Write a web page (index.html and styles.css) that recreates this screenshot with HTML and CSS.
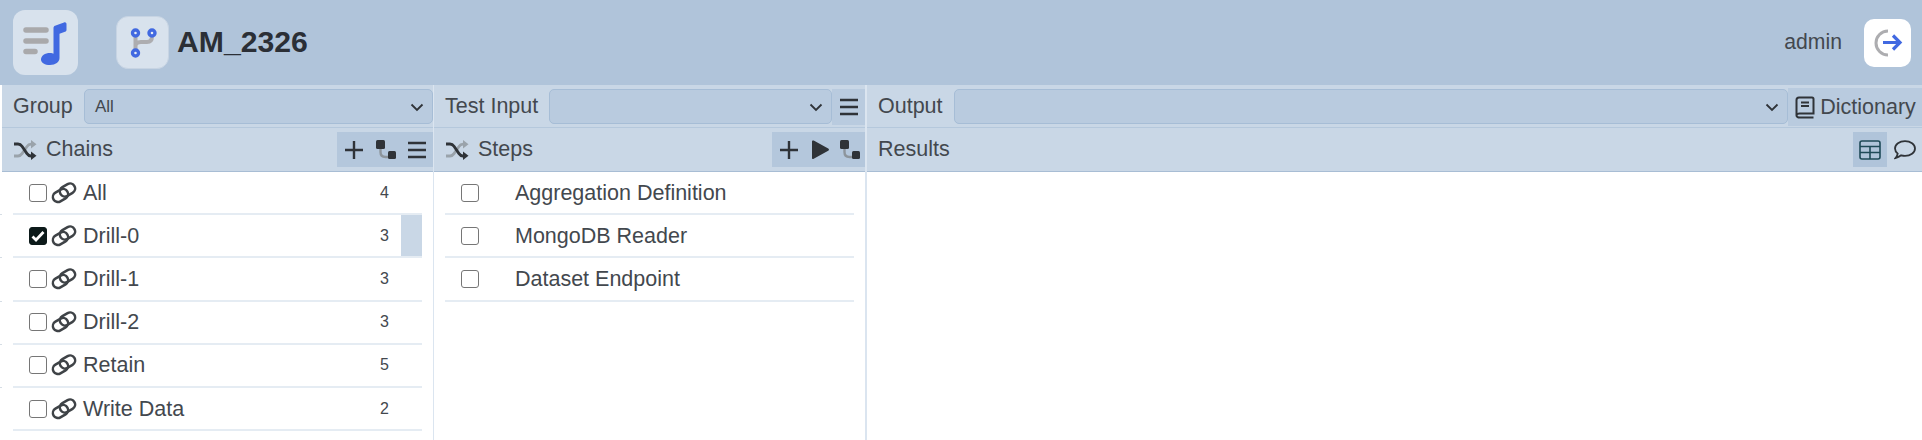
FILE: index.html
```html
<!DOCTYPE html>
<html lang="en">
<head>
<meta charset="utf-8">
<title>AM_2326</title>
<link rel="stylesheet" href="styles.css">
</head>
<body>
<svg class="defs" width="0" height="0" aria-hidden="true">
  <defs>
    <symbol id="i-shuffle" viewBox="0 0 24 20">
      <path d="M1 16h4c2 0 3-1 4-2.400l5-7.100c1-1.500 2-2.300 4-2.300h2" fill="none" stroke="#9aa3ab" stroke-width="2.800"/>
      <path d="M18 0l5.500 4.200L18 8.400z" fill="#9aa3ab"/>
      <path d="M1 4h4c2 0 3 .8 4 2.300l5 7.300c1 1.500 2 2.400 4 2.400h2" fill="none" stroke="#2f3338" stroke-width="2.800"/>
      <path d="M18 11.600l5.500 4.200L18 20z" fill="#2f3338"/>
    </symbol>
    <symbol id="i-plus" viewBox="0 0 20 20">
      <path d="M10 1v18M1 10h18" fill="none" stroke="#2f3338" stroke-width="2.400"/>
    </symbol>
    <symbol id="i-flow" viewBox="0 0 20 20">
      <path d="M4.500 8v4c0 3 2 5 5 5h3" fill="none" stroke="#8d959c" stroke-width="2.400"/>
      <rect x="0" y="0" width="9" height="9" rx="1.500" fill="#2f3338"/>
      <rect x="12" y="11" width="8" height="8" rx="1.500" fill="#2f3338"/>
    </symbol>
    <symbol id="i-menu" viewBox="0 0 20 20">
      <path d="M1 3h18M1 10h18M1 17h18" fill="none" stroke="#2f3338" stroke-width="2.600"/>
    </symbol>
    <symbol id="i-link" viewBox="0 0 26 22">
      <rect x="1.500" y="8.500" width="16" height="10" rx="5" transform="rotate(-30 9.500 13.500)" fill="none" stroke="#3f4347" stroke-width="2.500"/>
      <rect x="8.500" y="3" width="16" height="10" rx="5" transform="rotate(-30 16.500 8)" fill="none" stroke="#3f4347" stroke-width="2.500"/>
    </symbol>
  </defs>
</svg>

<header class="topbar">
  <div class="logo">
    <svg width="46" height="46" viewBox="0 0 46 46" aria-hidden="true">
      <path d="M3 10h20M3 21h20M3 31.500h9" fill="none" stroke="#a9a9ab" stroke-width="5.500" stroke-linecap="round"/>
      <path d="M30.500 8c0-1 .5-1.800 1.500-2.200l9-3.300c1.500-.5 2.500.3 2.500 1.700v5.500c0 1-.4 1.700-1.500 2.100l-5.500 2V38c0 4-4 7-9.500 7-5 0-9-2-9-5.500 0-3.800 4-6.500 9-6.500 1.500 0 3 .2 3.500.7z" fill="#4169e1"/>
    </svg>
  </div>
  <div class="project-icon">
    <svg width="30" height="32" viewBox="0 0 30 32" aria-hidden="true">
      <path d="M7.500 6v20M24 6v3c0 4-2 6-5 6h-6c-3 0-5.500 1-5.500 4" fill="none" stroke="#adadb0" stroke-width="4"/>
      <circle cx="7.500" cy="6" r="3" fill="#e8eef5" stroke="#4169e1" stroke-width="3.400"/>
      <circle cx="24" cy="6" r="3" fill="#e8eef5" stroke="#4169e1" stroke-width="3.400"/>
      <circle cx="7.500" cy="26" r="3" fill="#e8eef5" stroke="#4169e1" stroke-width="3.400"/>
    </svg>
  </div>
  <h1 class="title">AM_2326</h1>
  <span class="user">admin</span>
  <button class="logout" aria-label="Log out">
    <svg width="30" height="28" viewBox="0 0 30 28" aria-hidden="true">
      <path d="M15 2A12 12 0 0 0 15 26" fill="none" stroke="#adadb0" stroke-width="3"/>
      <path d="M10 13.500h17M20 6.500l7 7-7 7" fill="none" stroke="#4169e1" stroke-width="3.200"/>
    </svg>
  </button>
</header>

<main class="columns">
  <section class="col col-chains">
    <div class="filter">
      <label class="filter-label">Group</label>
      <div class="select select-text">All<svg class="chev" width="14" height="9" viewBox="0 0 14 9"><path d="M1.500 1.500L7 7l5.500-5.500" fill="none" stroke="#2f3338" stroke-width="1.800"/></svg></div>
    </div>
    <div class="head">
      <svg class="shuffle" width="24" height="20"><use href="#i-shuffle"/></svg>
      <span class="head-title">Chains</span>
      <div class="tools">
        <svg width="20" height="20"><use href="#i-plus"/></svg>
        <svg width="20" height="20"><use href="#i-flow"/></svg>
        <svg width="20" height="20"><use href="#i-menu"/></svg>
      </div>
    </div>
    <ul class="list">
      <li class="row"><span class="box"></span><svg class="link" width="26" height="22"><use href="#i-link"/></svg><span class="name">All</span><span class="count">4</span><span class="mark"></span></li>
      <li class="row"><span class="box checked"><svg width="14" height="12" viewBox="0 0 14 12"><path d="M1.500 6.500L5 10l7.500-8" fill="none" stroke="#fff" stroke-width="2.800"/></svg></span><svg class="link" width="26" height="22"><use href="#i-link"/></svg><span class="name">Drill-0</span><span class="count">3</span><span class="mark on"></span></li>
      <li class="row"><span class="box"></span><svg class="link" width="26" height="22"><use href="#i-link"/></svg><span class="name">Drill-1</span><span class="count">3</span><span class="mark"></span></li>
      <li class="row"><span class="box"></span><svg class="link" width="26" height="22"><use href="#i-link"/></svg><span class="name">Drill-2</span><span class="count">3</span><span class="mark"></span></li>
      <li class="row"><span class="box"></span><svg class="link" width="26" height="22"><use href="#i-link"/></svg><span class="name">Retain</span><span class="count">5</span><span class="mark"></span></li>
      <li class="row"><span class="box"></span><svg class="link" width="26" height="22"><use href="#i-link"/></svg><span class="name">Write Data</span><span class="count">2</span><span class="mark"></span></li>
    </ul>
  </section>

  <section class="col col-steps">
    <div class="filter">
      <label class="filter-label">Test Input</label>
      <div class="select"><svg class="chev" width="14" height="9" viewBox="0 0 14 9"><path d="M1.500 1.500L7 7l5.500-5.500" fill="none" stroke="#2f3338" stroke-width="1.800"/></svg></div>
      <div class="side-btn"><svg width="20" height="20"><use href="#i-menu"/></svg></div>
    </div>
    <div class="head">
      <svg class="shuffle" width="24" height="20"><use href="#i-shuffle"/></svg>
      <span class="head-title">Steps</span>
      <div class="tools">
        <svg width="20" height="20"><use href="#i-plus"/></svg>
        <svg width="20" height="20" viewBox="0 0 20 20"><path d="M2 1.500c0-1 .8-1.400 1.700-.9l14.500 8c1 .6 1 1.600 0 2.200l-14.500 8c-.9.500-1.700.1-1.700-.9z" fill="#2f3338"/></svg>
        <svg width="20" height="20"><use href="#i-flow"/></svg>
      </div>
    </div>
    <ul class="list list-steps">
      <li class="row step"><span class="box"></span><span class="name">Aggregation Definition</span></li>
      <li class="row step"><span class="box"></span><span class="name">MongoDB Reader</span></li>
      <li class="row step"><span class="box"></span><span class="name">Dataset Endpoint</span></li>
    </ul>
  </section>

  <section class="col col-output">
    <div class="filter">
      <label class="filter-label">Output</label>
      <div class="select"><svg class="chev" width="14" height="9" viewBox="0 0 14 9"><path d="M1.500 1.500L7 7l5.500-5.500" fill="none" stroke="#2f3338" stroke-width="1.800"/></svg></div>
      <div class="side-btn dict">
        <svg width="20" height="23" viewBox="0 0 20 23"><path d="M4 1.500h13c.8 0 1.500.7 1.500 1.500v14.500H4.500c-1.700 0-3 1.100-3 2s1.300 2 3 2h14M1.500 19.500V4c0-1.400 1.100-2.500 2.500-2.500M6 6.500h8M6 10h8" fill="none" stroke="#2f3338" stroke-width="2"/></svg>
        <span>Dictionary</span>
      </div>
    </div>
    <div class="head">
      <span class="head-title results">Results</span>
      <div class="view-tools">
        <div class="view active">
          <svg width="22" height="20" viewBox="0 0 22 20"><rect x="1" y="1" width="20" height="18" rx="2" fill="none" stroke="#1f4a58" stroke-width="1.600"/><path d="M1 6.500h20M1 12.500h20M11 6.500V19" fill="none" stroke="#1f4a58" stroke-width="1.600"/></svg>
        </div>
        <div class="view">
          <svg width="22" height="20" viewBox="0 0 22 20"><path d="M11 1.200c5.500 0 10 3 10 7.300s-4.500 7.300-10 7.300c-1.300 0-2.600-.2-3.800-.5-1.300 1-3.200 2.200-5.700 2.700 1.100-1.300 1.900-2.900 2.200-4.400C2.200 12.300 1 10.500 1 8.500 1 4.200 5.500 1.200 11 1.200z" fill="none" stroke="#2f3338" stroke-width="1.800"/></svg>
        </div>
      </div>
    </div>
  </section>
</main>
</body>
</html>
```

FILE: styles.css
```css
* { box-sizing: border-box; }
html, body { margin: 0; padding: 0; }
body {
  width: 1922px;
  height: 440px;
  overflow: hidden;
  background: #fff;
  color: #43484e;
  font-family: "Liberation Sans", Arial, sans-serif;
  font-size: 21.500px;
}
.defs { position: absolute; }

.topbar {
  height: 85px;
  background: #b0c4da;
  display: flex;
  align-items: center;
  padding: 0 0 0 13px;
}
.logo {
  width: 65px;
  height: 65px;
  border-radius: 12px;
  background: #d8e2ed;
  display: flex;
  align-items: center;
  justify-content: center;
}
.project-icon {
  width: 53px;
  height: 53px;
  margin-left: 38px;
  border: 1px solid #c7d4e3;
  border-radius: 12px;
  background: #d8e2ed;
  display: flex;
  align-items: center;
  justify-content: center;
}
.title {
  margin: -2px 0 0 8px;
  font-size: 30.200px;
  font-weight: 700;
  color: #2b2f36;
}
.user { margin-left: auto; margin-top: -1px; font-size: 21.200px; color: #43484e; }
.logout {
  width: 47px;
  height: 48px;
  margin: 0 11px 0 22px;
  padding: 0;
  border: 0;
  border-radius: 10px;
  background: #fff;
  display: flex;
  align-items: center;
  justify-content: center;
}

.columns {
  display: flex;
  height: 355px;
}
.col { min-width: 0; display: flex; flex-direction: column; }
.col-chains { width: 434px; border-right: 1px solid #dbe5f0; }
.col-steps { width: 433px; border-right: 2px solid #dbe5f0; }
.col-output { flex: 1; }

.filter {
  height: 43px;
  padding: 4px 0 0 0;
  display: flex;
  align-items: flex-start;
  background: #c9d7e6;
  border-bottom: 1px solid #b5c8dc;
}
.col-chains .filter, .col-chains .head { margin-left: 2px; }
.filter-label { width: 82px; flex: none; padding: 5px 0 0 11px; white-space: nowrap; }
.col-steps .filter-label { width: 115px; }
.col-output .filter-label { width: 87px; }
.select {
  flex: 1;
  height: 35px;
  position: relative;
  padding: 8px 0 0 10px;
  background: #b9cbdf;
  border: 1px solid #a6bdd6;
  border-radius: 5px;
  font-size: 17px;
  line-height: 18px;
}
.chev { position: absolute; right: 8px; top: 13px; }
.side-btn {
  height: 36px;
  background: #b9cbdf;
  display: flex;
  align-items: center;
  justify-content: center;
}
.col-steps .side-btn { width: 33px; }
.dict { width: 134px; gap: 5px; padding-left: 1px; height: 38px; margin-top: -1px; }

.head {
  height: 44px;
  display: flex;
  align-items: center;
  background: #c9d7e6;
  border-bottom: 1px solid #a8bdd4;
}
.shuffle { margin-left: 11px; flex: none; }
.head-title { margin-left: 9px; }
.results { margin-left: 11px; }
.tools {
  margin-left: auto;
  width: 96px;
  height: 35px;
  background: #b4c7dc;
  display: flex;
  align-items: center;
  justify-content: space-between;
  padding: 0 6px 0 7px;
}
.col-steps .tools { width: 93px; padding: 0 5px 0 7px; }
.view-tools { margin-left: auto; display: flex; height: 35px; }
.view { width: 34px; display: flex; align-items: center; justify-content: center; }
.view.active { background: #b0c4da; }
.view-tools .view:last-child { width: 35px; }

.list {
  list-style: none;
  margin: 0;
  padding: 0 11px 0 13px;
}
.col-chains .list {
  background: repeating-linear-gradient(to bottom, transparent 0, transparent 42.200px, #d5dde5 42.200px, #d5dde5 43.200px) 0 0 / 2px 221px no-repeat;
}
.list-steps { padding: 0 11px 0 11px; }
.row {
  height: 43.200px;
  display: flex;
  align-items: center;
  border-bottom: 2px solid #e5ecf3;
  padding-left: 16px;
}
.box {
  width: 18px;
  height: 18px;
  flex: none;
  border: 1.500px solid #767676;
  border-radius: 3px;
  background: #fff;
  display: flex;
  align-items: center;
  justify-content: center;
}
.box.checked { background: #0c1a1a; border-color: #0c1a1a; }
.link { margin-left: 4px; flex: none; }
.row .name { margin-left: 6px; padding-top: 1px; }
.step .name { margin-left: 36px; }
.count { margin-left: auto; font-size: 16px; margin-right: 12px; }
.mark { width: 21px; align-self: stretch; }
.mark.on { background: #c9d7e6; }
```
